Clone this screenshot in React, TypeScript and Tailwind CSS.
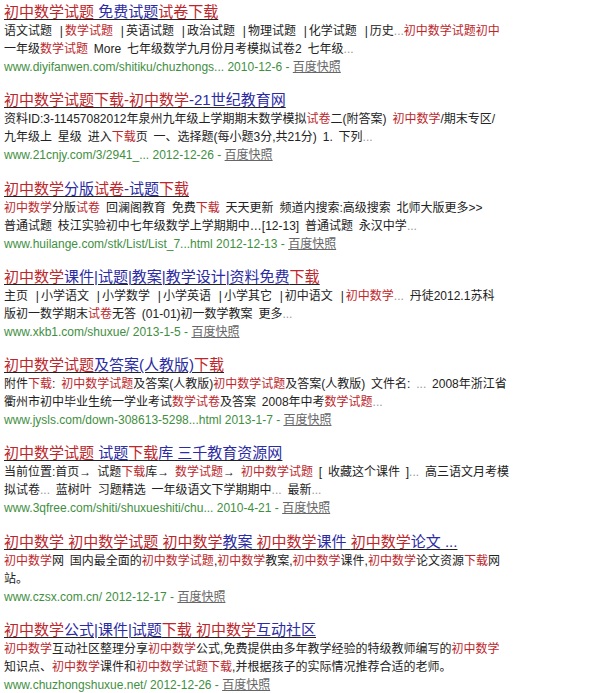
import React from 'react';

type Result = {
  title: string;
  lines: string[];
  url: string;
};

// [[...]] marks the red keyword highlight, "..." is rendered grey
const results: Result[] = [
  {
    title: '[[初中数学试题]] 免费试题[[试卷下载]]',
    lines: [
      '语文试题 |[[数学试题]] |英语试题 |政治试题 |物理试题 |化学试题 |历史...[[初中数学试题初中]]',
      '一年级[[数学试题]] More 七年级数学九月份月考模拟试卷2 七年级...',
    ],
    url: 'www.diyifanwen.com/shitiku/chuzhongs... 2010-12-6 - ',
  },
  {
    title: '[[初中数学试题下载-初中数学]]-21世纪教育网',
    lines: [
      '资料ID:3-11457082012年泉州九年级上学期期末数学模拟[[试卷]]二(附答案) [[初中数学]]/期末专区/',
      '九年级上 星级 进入[[下载]]页 一、选择题(每小题3分,共21分) 1. 下列...',
    ],
    url: 'www.21cnjy.com/3/2941_... 2012-12-26 - ',
  },
  {
    title: '[[初中数学]]分版[[试卷]]-试题[[下载]]',
    lines: [
      '[[初中数学]]分版[[试卷]] 回澜阁教育 免费[[下载]] 天天更新 频道内搜索:高级搜索 北师大版更多>>',
      '普通试题 枝江实验初中七年级数学上学期期中…[12-13] 普通试题 永汉中学...',
    ],
    url: 'www.huilange.com/stk/List/List_7...html 2012-12-13 - ',
  },
  {
    title: '[[初中数学]]课件|试题|教案|教学设计|资料免费[[下载]]',
    lines: [
      '主页 |小学语文 |小学数学 |小学英语 |小学其它 |初中语文 |[[初中数学]]... 丹徒2012.1苏科',
      '版初一数学期末[[试卷]]无答 (01-01)初一数学教案 更多...',
    ],
    url: 'www.xkb1.com/shuxue/ 2013-1-5 - ',
  },
  {
    title: '[[初中数学试题]]及答案(人教版)[[下载]]',
    lines: [
      '附件[[下载]]: [[初中数学试题]]及答案(人教版)[[初中数学试题]]及答案(人教版) 文件名: ... 2008年浙江省',
      '衢州市初中毕业生统一学业考试[[数学试卷]]及答案 2008年中考[[数学试题]]...',
    ],
    url: 'www.jysls.com/down-308613-5298...html 2013-1-7 - ',
  },
  {
    title: '[[初中数学试题]] 试题[[下载]]库 三千教育资源网',
    lines: [
      '当前位置:首页→ 试题[[下载]]库→ [[数学试题]]→ [[初中数学试题]] [ 收藏这个课件 ]... 高三语文月考模',
      '拟试卷... 蓝树叶 习题精选 一年级语文下学期期中... 最新...',
    ],
    url: 'www.3qfree.com/shiti/shuxueshiti/chu... 2010-4-21 - ',
  },
  {
    title: '[[初中数学]] [[初中数学试题]] [[初中数学]]教案 [[初中数学]]课件 [[初中数学]]论文 ...',
    lines: [
      '[[初中数学]]网 国内最全面的[[初中数学试题]],[[初中数学]]教案,[[初中数学]]课件,[[初中数学]]论文资源[[下载]]网',
      '站。',
    ],
    url: 'www.czsx.com.cn/ 2012-12-17 - ',
  },
  {
    title: '[[初中数学]]公式|课件|试题[[下载]] [[初中数学]]互动社区',
    lines: [
      '[[初中数学]]互动社区整理分享[[初中数学]]公式,免费提供由多年教学经验的特级教师编写的[[初中数学]]',
      '知识点、[[初中数学]]课件和[[初中数学试题下载]],并根据孩子的实际情况推荐合适的老师。',
    ],
    url: 'www.chuzhongshuxue.net/ 2012-12-26 - ',
  },
];

function splitMarked(text: string) {
  return text.split(/(\[\[.*?\]\])/).filter(Boolean).map(part => {
    if (part.startsWith('[[')) return { text: part.slice(2, -2), red: true };
    return { text: part, red: false };
  });
}

function Title({ text }: { text: string }) {
  return (
    <a href="#" className="block h-[20px] leading-[20px] text-[15px] whitespace-nowrap underline decoration-1 underline-offset-2">
      {splitMarked(text).map((seg, i) => (
        <span key={i} className={seg.red ? 'text-[#bd262b]' : 'text-[#2b2ba3]'}>
          {seg.text}
        </span>
      ))}
    </a>
  );
}

function Plain({ text }: { text: string }) {
  // grey ellipsis and slightly spaced pipes inside the plain snippet text
  return (
    <>
      {text.split(/(\.\.\.|\|)/).filter(Boolean).map((p, j) => {
        if (p === '...') return <span key={j} className="text-[#999]">...</span>;
        if (p === '|') return <span key={j} className="mx-[2px]">|</span>;
        return <span key={j}>{p}</span>;
      })}
    </>
  );
}

function Line({ text }: { text: string }) {
  return (
    <div className="h-[18px] leading-[18px] whitespace-nowrap [word-spacing:2.5px]">
      {splitMarked(text).map((seg, i) =>
        seg.red ? (
          <span key={i} className="text-[#bd262b]">{seg.text}</span>
        ) : (
          <Plain key={i} text={seg.text} />
        )
      )}
    </div>
  );
}

export default function App() {
  return (
    <div
      className="w-[600px] h-[693px] overflow-hidden bg-white pt-[2px] pl-[4px] text-[12px] text-[#222]"
      style={{ fontFamily: '"Liberation Sans", "Noto Sans CJK SC", sans-serif' }}
    >
      <div className="flex flex-col gap-[14.3px]">
        {results.map((r, i) => (
          <div key={i}>
            <Title text={r.title} />
            {r.lines.map((l, j) => (
              <Line key={j} text={l} />
            ))}
            <div className="h-[18px] leading-[18px] whitespace-nowrap text-[#3f8f3f]">
              {r.url}
              <a href="#" className="text-[#666] underline">百度快照</a>
            </div>
          </div>
        ))}
      </div>
    </div>
  );
}
